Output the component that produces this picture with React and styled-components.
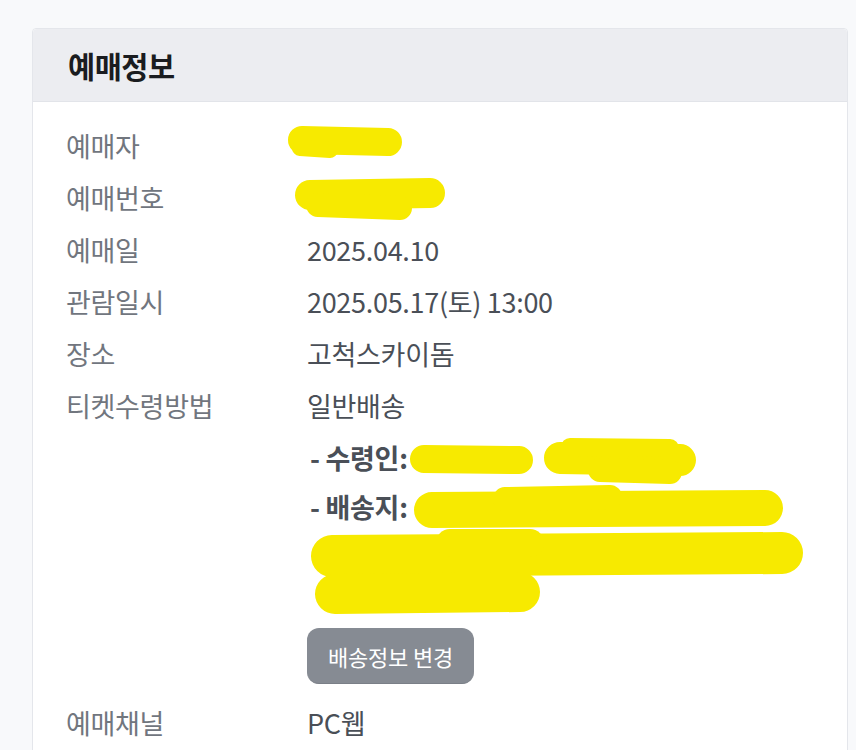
import React from 'react';
import styled, { createGlobalStyle } from 'styled-components';

const Global = createGlobalStyle`
  body {
    margin: 0;
    background: #f8f9fb;
    font-family: "Noto Sans CJK KR", "Noto Sans", sans-serif;
  }
`;

const Page = styled.div`
  position: relative;
  padding: 28px 8px 0 32px;
  height: 750px;
  box-sizing: border-box;
  overflow: hidden;
`;

const Card = styled.section`
  background: #fff;
  border: 1px solid #e4e6eb;
  border-radius: 4px;
  width: 816px;
  box-sizing: border-box;
  padding-bottom: 60px;
`;

const Header = styled.div`
  height: 72px;
  background: #ecedf1;
  border-bottom: 1px solid #e2e4e9;
  display: flex;
  align-items: center;
  padding-left: 35px;
  border-radius: 4px 4px 0 0;
`;

const Title = styled.h2`
  margin: 0;
  font-size: 29.5px;
  font-weight: 700;
  color: #1a1c20;
  letter-spacing: -0.5px;
`;

const Body = styled.div`
  padding: 18px 0 0 33px;
`;

const Row = styled.div`
  display: grid;
  grid-template-columns: 241px 1fr;
  align-items: start;
`;

const Label = styled.div`
  height: 52px;
  line-height: 52px;
  font-size: 27px;
  color: #71767e;
  letter-spacing: -0.3px;
`;

const Value = styled.div`
  font-size: 27px;
  color: #4a4f57;
  letter-spacing: -0.3px;
`;

const Line = styled.div`
  height: ${({ h }) => h || 52}px;
  line-height: ${({ h }) => h || 52}px;
`;

const SubLine = styled(Line)`
  font-weight: 700;
  padding-left: 3px;
`;

const Button = styled.button`
  margin: 24px 0 13px;
  height: 56px;
  padding: 0 21px;
  border: none;
  border-bottom: 1px solid #7a7f87;
  border-radius: 12px;
  background: #868b93;
  color: #fff;
  font-family: inherit;
  font-size: 22px;
  letter-spacing: -0.2px;
  cursor: pointer;
`;

const Overlay = styled.svg`
  position: absolute;
  left: 0;
  top: 0;
  width: 856px;
  height: 750px;
  pointer-events: none;
`;

const strokes = [
  [302, 140, 388, 142, 28],
  [300, 148, 330, 150, 16],
  [310, 195, 430, 193, 30],
  [318, 205, 400, 208, 24],
  [424, 459, 519, 460, 28],
  [560, 458, 680, 460, 32],
  [600, 470, 670, 472, 24],
  [570, 447, 670, 448, 18],
  [432, 510, 765, 508, 36],
  [505, 499, 610, 497, 24],
  [332, 556, 782, 553, 42],
  [450, 543, 530, 543, 28],
  [335, 594, 520, 592, 40],
];

const Redaction = () => (
  <Overlay viewBox="0 0 856 750">
    {strokes.map(([x1, y1, x2, y2, w], i) => (
      <line key={i} x1={x1} y1={y1} x2={x2} y2={y2} stroke="#f7ea00" strokeWidth={w} strokeLinecap="round" />
    ))}
  </Overlay>
);

const rows = [
  ['예매자', ''],
  ['예매번호', ''],
  ['예매일', '2025.04.10'],
  ['관람일시', '2025.05.17(토) 13:00'],
  ['장소', '고척스카이돔'],
];

export default function App() {
  return (
    <Page>
      <Global />
      <Card>
        <Header>
          <Title>예매정보</Title>
        </Header>
        <Body>
          {rows.map(([k, v]) => (
            <Row key={k}>
              <Label>{k}</Label>
              <Value><Line>{v}</Line></Value>
            </Row>
          ))}
          <Row>
            <Label>티켓수령방법</Label>
            <Value>
              <Line>일반배송</Line>
              <SubLine>- 수령인:</SubLine>
              <SubLine h={46}>- 배송지:</SubLine>
              <Line h={37} />
              <Line h={37} />
              <Button>배송정보 변경</Button>
            </Value>
          </Row>
          <Row>
            <Label>예매채널</Label>
            <Value><Line>PC웹</Line></Value>
          </Row>
        </Body>
      </Card>
      <Redaction />
    </Page>
  );
}
